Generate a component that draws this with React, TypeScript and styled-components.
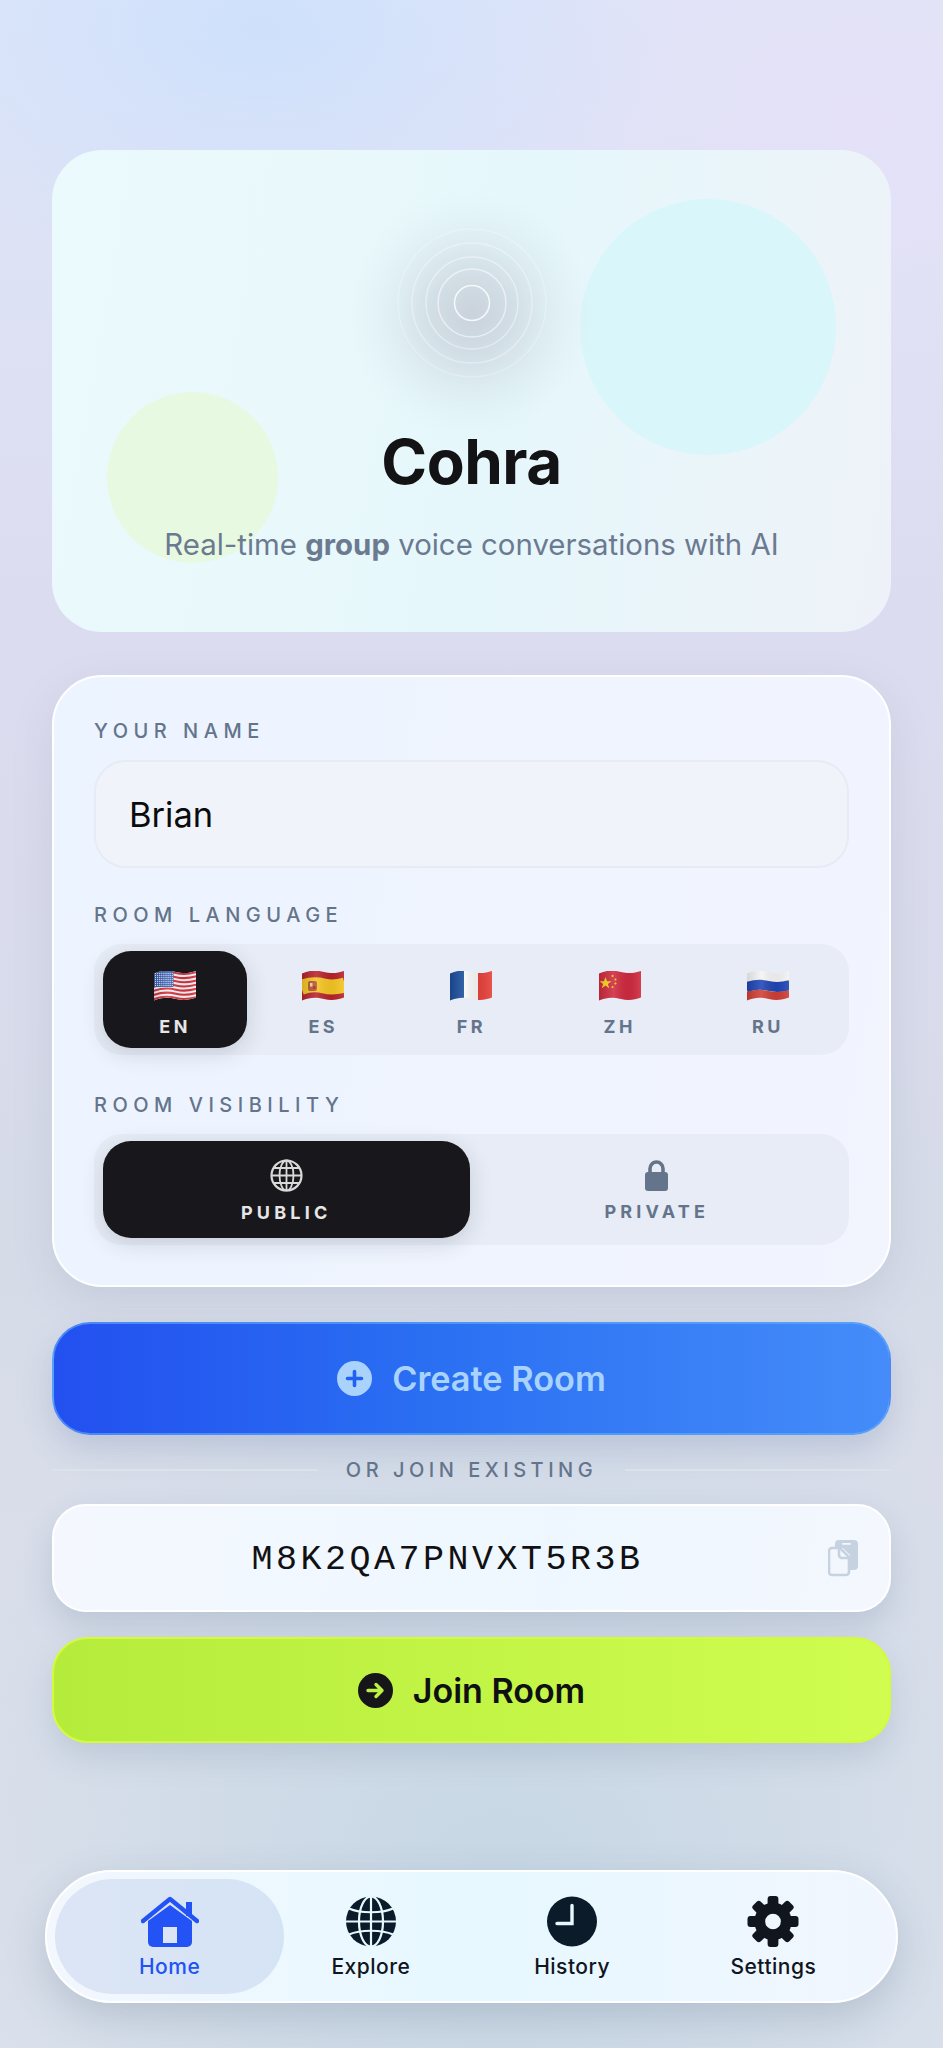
import React from "react";
import styled, { createGlobalStyle } from "styled-components";

const GlobalStyle = createGlobalStyle`
  html, body {
    margin: 0;
    padding: 0;
  }
  body {
    font-family: Inter, "Liberation Sans", sans-serif;
    background: #dfe3ee;
  }
  * {
    box-sizing: border-box;
  }
`;

const Page = styled.div`
  width: 943px;
  height: 2048px;
  padding: 150px 52px 45px;
  display: flex;
  flex-direction: column;
  overflow: hidden;
  background:
    radial-gradient(420px 260px at 260px 30px, rgba(205, 224, 252, 0.9), transparent),
    radial-gradient(520px 420px at 860px 120px, rgba(229, 225, 248, 0.9), transparent),
    radial-gradient(600px 600px at 500px 1900px, rgba(196, 214, 228, 0.9), transparent),
    linear-gradient(180deg, #dfe6f8 0%, #dcdcf0 30%, #d6dbe8 60%, #dde2ec 100%);
`;

const Hero = styled.section`
  position: relative;
  height: 482px;
  margin-bottom: 43px;
  padding-top: 73px;
  border-radius: 50px;
  overflow: hidden;
  display: flex;
  flex-direction: column;
  align-items: center;
  background: linear-gradient(100deg, #ebfafc 0%, #e6f7fb 55%, #eef2f8 100%);
`;

const Blob = styled.div<{ $size: number; $x: number; $y: number; $color: string }>`
  position: absolute;
  left: ${(p) => p.$x}px;
  top: ${(p) => p.$y}px;
  width: ${(p) => p.$size}px;
  height: ${(p) => p.$size}px;
  border-radius: 50%;
  background: ${(p) => p.$color};
`;

const LogoMark = styled.svg`
  position: relative;
  display: block;
  overflow: visible;
`;

const Title = styled.h1`
  position: relative;
  margin: 41px 0 0;
  font-size: 62px;
  line-height: 75px;
  font-weight: 700;
  letter-spacing: -0.5px;
  color: #131316;
`;

const Subtitle = styled.p`
  position: relative;
  margin: 28px 0 0;
  font-size: 29.4px;
  line-height: 36px;
  font-weight: 400;
  color: #6b7a90;
  strong {
    font-weight: 700;
  }
`;

const FormCard = styled.section`
  height: 612px;
  padding: 41px 40px 0;
  border: 2px solid #fff;
  border-radius: 50px;
  background: linear-gradient(100deg, #ecf4ff 0%, #f2f4fe 100%);
  box-shadow: 0 14px 40px rgba(110, 125, 155, 0.16);
  margin-bottom: 35px;
`;

const FieldLabel = styled.div<{ $gap?: number }>`
  height: 26px;
  margin-top: ${(p) => p.$gap ?? 0}px;
  margin-bottom: 16px;
  font-size: 20px;
  line-height: 26px;
  font-weight: 500;
  letter-spacing: 5.5px;
  color: #64748b;
`;

const NameInput = styled.input`
  display: block;
  width: 100%;
  height: 108px;
  padding: 0 33px;
  border: 2px solid #e6ebf4;
  border-radius: 32px;
  background: #f0f4fa;
  font-family: inherit;
  font-size: 34.5px;
  font-weight: 400;
  color: #0b0b0e;
  outline: none;
`;

const Segment = styled.div<{ $cols: number }>`
  display: grid;
  grid-template-columns: repeat(${(p) => p.$cols}, 1fr);
  gap: 4px;
  height: 111px;
  padding: 7px 9px;
  border-radius: 28px;
  background: #e7ecf6;
`;

const SegmentItem = styled.div<{ $active?: boolean; $top: number }>`
  display: flex;
  flex-direction: column;
  align-items: center;
  justify-content: flex-start;
  padding-top: ${(p) => p.$top}px;
  border-radius: 28px;
  color: ${(p) => (p.$active ? "#e6e6e6" : "#64748b")};
  background: ${(p) => (p.$active ? "#18181c" : "transparent")};
  box-shadow: ${(p) => (p.$active ? "0 6px 22px rgba(40, 50, 70, 0.16)" : "none")};
`;

const SegmentText = styled.span`
  margin-top: 15px;
  font-size: 18px;
  line-height: 22px;
  font-weight: 700;
  letter-spacing: 3.5px;
`;

const VisibilityText = styled(SegmentText)`
  margin-top: 10px;
  letter-spacing: 4.2px;
`;

const CreateButton = styled.button`
  display: flex;
  align-items: center;
  justify-content: center;
  gap: 20px;
  width: 100%;
  height: 113px;
  flex: none;
  border: 2px solid rgba(100, 175, 250, 0.6);
  border-radius: 38px;
  background: linear-gradient(90deg, #2350f0 0%, #2a6ff2 45%, #458cfa 100%);
  box-shadow: 0 14px 30px rgba(90, 115, 160, 0.22);
  color: #a9d3fd;
  font-family: inherit;
  font-size: 34.3px;
  font-weight: 600;
`;

const Divider = styled.div`
  display: flex;
  align-items: center;
  gap: 28px;
  height: 69px;
  flex: none;
  font-size: 20px;
  font-weight: 500;
  letter-spacing: 4.5px;
  color: #64748b;
  &::before,
  &::after {
    content: "";
    flex: 1;
    height: 2px;
    background: #dbe2ea;
  }
`;

const CodeBox = styled.div`
  display: flex;
  align-items: center;
  gap: 17px;
  height: 108px;
  flex: none;
  padding: 0 31px 0 30px;
  border: 2px solid #fff;
  border-radius: 34px;
  background: linear-gradient(100deg, #f4f8fe 0%, #eef7ff 60%, #f4f7fe 100%);
  box-shadow: 0 14px 30px rgba(90, 110, 140, 0.2);
  margin-bottom: 25px;
`;

const CodeInput = styled.input`
  flex: 1;
  min-width: 0;
  border: 0;
  padding: 4px 0 0;
  background: transparent;
  outline: none;
  text-align: center;
  font-family: "Liberation Mono", monospace;
  font-size: 35px;
  letter-spacing: 3.5px;
  color: #111114;
`;

const JoinButton = styled.button`
  display: flex;
  align-items: center;
  justify-content: center;
  gap: 20px;
  width: 100%;
  height: 106px;
  flex: none;
  border: 2px solid #d4fb3a;
  border-radius: 36px;
  background: linear-gradient(90deg, #b5ec3b 0%, #d0fd4f 100%);
  box-shadow: 0 14px 30px rgba(90, 110, 140, 0.18);
  color: #0f1013;
  font-family: inherit;
  font-size: 34px;
  font-weight: 600;
`;

const TabBar = styled.nav`
  display: flex;
  height: 133px;
  margin: auto -7px 0;
  flex: none;
  padding: 0 22px;
  border: 2px solid #fff;
  border-radius: 67px;
  background: linear-gradient(90deg, #f3f7fe 0%, #e7f8ff 50%, #f1f6fe 100%);
  box-shadow: 0 14px 40px rgba(90, 105, 130, 0.24);
`;

const TabItem = styled.div<{ $active?: boolean }>`
  position: relative;
  flex: 1;
  display: flex;
  flex-direction: column;
  align-items: center;
  padding-top: 24px;
  color: ${(p) => (p.$active ? "#2352f5" : "#10151e")};
  font-size: 21px;
  line-height: 26px;
  font-weight: 500;
  letter-spacing: 0.5px;
  &::before {
    content: "";
    display: ${(p) => (p.$active ? "block" : "none")};
    position: absolute;
    top: 7px;
    bottom: 7px;
    left: -14px;
    right: -14px;
    border-radius: 58px;
    background: linear-gradient(90deg, #dce5f5 0%, #d5e4f5 100%);
  }
`;

const TabGlyph = styled.svg`
  position: relative;
  display: block;
  margin-bottom: 7px;
`;

const TabLabel = styled.span`
  position: relative;
`;

const stripe = (y: number) => `M-1 ${y + 2.5} C8 ${y - 1} 14 ${y - 1} 22 ${y + 1} C30 ${y + 3} 36 ${y + 2} 43 ${y}`;

const FlagFrame = ({ id, children }: { id: string; children: React.ReactNode }) => (
  <svg width="42" height="30" viewBox="0 0 42 30">
    <defs>
      <clipPath id={id}>
        <path d="M0 2.5 C8 -1 14 -1 22 1 C30 3 36 2 42 0 L42 26.5 C36 28.5 30 30 22 28 C14 26 8 26 0 29.5 Z" />
      </clipPath>
      <linearGradient id={id + "-sh"} x1="0" x2="1" y1="0" y2="0">
        <stop offset="0" stopColor="#000" stopOpacity="0.12" />
        <stop offset="0.35" stopColor="#fff" stopOpacity="0.12" />
        <stop offset="0.7" stopColor="#000" stopOpacity="0.05" />
        <stop offset="1" stopColor="#fff" stopOpacity="0.1" />
      </linearGradient>
    </defs>
    <g clipPath={`url(#${id})`}>
      {children}
      <rect x="0" y="0" width="42" height="30" fill={`url(#${id}-sh)`} />
    </g>
  </svg>
);

const FlagUS = () => {
  const stripes = Array.from({ length: 13 }, (_, i) => i);
  const stars: [number, number][] = [];
  for (let r = 0; r < 7; r++) for (let c = 0; c < 9; c++) stars.push([1.5 + c * 2.1, 2.4 + r * 2]);
  return (
    <FlagFrame id="us">
      <rect width="42" height="30" fill="#f4f4f4" />
      {stripes.map((i) =>
        i % 2 === 0 ? <path key={i} d={stripe(i * 2.08 + 1)} stroke="#d5313f" strokeWidth="2.08" fill="none" /> : null
      )}
      <rect width="19.5" height="16" fill="#3a5fb0" />
      {stars.map(([x, y]) => (
        <circle key={`${x}-${y}`} cx={x} cy={y} r="0.55" fill="#e8eefb" />
      ))}
    </FlagFrame>
  );
};

const FlagES = () => (
  <FlagFrame id="es">
    <rect width="42" height="30" fill="#b7242c" />
    <path d={stripe(14)} stroke="#f4c524" strokeWidth="15" fill="none" />
    <rect x="6" y="10" width="9" height="10" rx="2" fill="#b8562e" />
    <rect x="8" y="12" width="2.5" height="3.5" fill="#e8d9a0" />
    <rect x="11" y="15" width="2.5" height="3" fill="#a52a2a" />
  </FlagFrame>
);

const FlagFR = () => (
  <FlagFrame id="fr">
    <rect width="14" height="30" fill="#1c4f9c" />
    <rect x="14" width="14" height="30" fill="#f7f7f7" />
    <rect x="28" width="14" height="30" fill="#e5433b" />
  </FlagFrame>
);

const FlagZH = () => (
  <FlagFrame id="zh">
    <rect width="42" height="30" fill="#cf2a3e" />
    <polygon
      points="6.5,6 8,10.2 12.5,10.2 8.9,12.9 10.2,17.2 6.5,14.6 2.8,17.2 4.1,12.9 0.5,10.2 5,10.2"
      fill="#f8d61c"
    />
    <circle cx="13.5" cy="5" r="1" fill="#f8d61c" />
    <circle cx="16.5" cy="8.5" r="1" fill="#f8d61c" />
    <circle cx="16.5" cy="12.5" r="1" fill="#f8d61c" />
    <circle cx="13.5" cy="16" r="1" fill="#f8d61c" />
  </FlagFrame>
);

const FlagRU = () => (
  <FlagFrame id="ru">
    <rect width="42" height="30" fill="#f4f4f4" />
    <path d={stripe(14)} stroke="#1f45b5" strokeWidth="10" fill="none" />
    <path d={stripe(24)} stroke="#cf3f36" strokeWidth="10" fill="none" />
  </FlagFrame>
);

const languages = [
  { code: "EN", flag: <FlagUS />, active: true },
  { code: "ES", flag: <FlagES /> },
  { code: "FR", flag: <FlagFR /> },
  { code: "ZH", flag: <FlagZH /> },
  { code: "RU", flag: <FlagRU /> },
];

const RingsLogo = () => (
  <LogoMark width="160" height="160" viewBox="-80 -80 160 160">
    <defs>
      <radialGradient id="glow" cx="0.5" cy="0.5" r="0.5">
        <stop offset="0" stopColor="#c8d0da" stopOpacity="0.95" />
        <stop offset="0.3" stopColor="#ccd6de" stopOpacity="0.8" />
        <stop offset="0.65" stopColor="#d2e2e8" stopOpacity="0.4" />
        <stop offset="1" stopColor="#dcecf2" stopOpacity="0" />
      </radialGradient>
    </defs>
    <circle cx="0" cy="12" r="125" fill="url(#glow)" />
    <g fill="none" stroke="#fff">
      <circle r="74" strokeOpacity="0.25" strokeWidth="1.5" />
      <circle r="60" strokeOpacity="0.35" strokeWidth="1.5" />
      <circle r="46" strokeOpacity="0.42" strokeWidth="1.5" />
      <circle r="34" strokeOpacity="0.55" strokeWidth="1.5" />
      <circle r="17.5" strokeOpacity="0.8" strokeWidth="1.6" />
    </g>
  </LogoMark>
);

const PublicGlobe = () => (
  <svg width="33" height="33" viewBox="0 0 33 33" fill="none" stroke="#d9d9d9" strokeWidth="1.8">
    <circle cx="16.5" cy="16.5" r="15" strokeWidth="2.2" />
    <ellipse cx="16.5" cy="16.5" rx="7" ry="15" />
    <path d="M16.5 1.5V31.5M1.5 16.5H31.5M4 9H29M4 24H29" />
  </svg>
);

const LockIcon = () => (
  <svg width="23" height="32" viewBox="0 0 23 32">
    <path d="M5 16V9.5a6.5 6.5 0 0 1 13 0V16" fill="none" stroke="#64748b" strokeWidth="3.6" />
    <rect x="0" y="13" width="23" height="19" rx="3" fill="#64748b" />
  </svg>
);

const PlusIcon = () => (
  <svg width="35" height="35" viewBox="0 0 35 35">
    <circle cx="17.5" cy="17.5" r="17.5" fill="#a9d3fd" />
    <path d="M17.5 10.5v14M10.5 17.5h14" stroke="#2160f0" strokeWidth="3.6" strokeLinecap="round" />
  </svg>
);

const ArrowIcon = () => (
  <svg width="35" height="35" viewBox="0 0 35 35">
    <circle cx="17.5" cy="17.5" r="17.5" fill="#16161a" />
    <path d="M10 17.5h14M18 11.5l6 6-6 6" fill="none" stroke="#bff045" strokeWidth="3.4" strokeLinecap="round" strokeLinejoin="round" />
  </svg>
);

const CopyIcon = () => (
  <svg width="30" height="37" viewBox="0 0 30 37" style={{ flex: "none" }}>
    <path d="M11 0H26a4 4 0 0 1 4 4V26a4 4 0 0 1-4 4H22V15L15 8H7V4a4 4 0 0 1 4-4Z" fill="#c6d2df" />
    <rect x="14" y="3" width="9" height="1.8" rx="0.9" fill="#f2f7fe" />
    <path d="M4 8H12L21 17V32a3 3 0 0 1-3 3H4a3 3 0 0 1-3-3V11a3 3 0 0 1 3-3Z" fill="#f2f7fe" stroke="#c6d2df" strokeWidth="2.6" />
    <path d="M11 8V15a3 3 0 0 0 3 3H21" fill="none" stroke="#c6d2df" strokeWidth="2.6" />
  </svg>
);

const HomeGlyph = () => (
  <TabGlyph width="58" height="51" viewBox="0 0 58 51">
    <rect x="45" y="6" width="6" height="14" fill="#2352f5" />
    <path d="M7 25 29 9 51 25V46a5 5 0 0 1-5 5H12a5 5 0 0 1-5-5Z" fill="#2352f5" />
    <path d="M2 25 29 3 56 25" fill="none" stroke="#2352f5" strokeWidth="4.4" strokeLinecap="round" strokeLinejoin="round" />
    <rect x="22" y="31" width="14" height="16" fill="#dce5f5" />
  </TabGlyph>
);

const ExploreGlyph = () => (
  <TabGlyph width="50" height="51" viewBox="0 0 50 50">
    <circle cx="25" cy="25" r="25" fill="#0c1b2a" />
    <g fill="none" stroke="#e8f8ff" strokeWidth="2.2">
      <ellipse cx="25" cy="25" rx="12" ry="25" />
      <path d="M25 0V50M0 25H50" />
      <path d="M3 12C14 17 36 17 47 12M3 38C14 33 36 33 47 38" />
    </g>
  </TabGlyph>
);

const HistoryGlyph = () => (
  <TabGlyph width="50" height="51" viewBox="0 0 50 50">
    <circle cx="25" cy="25" r="25" fill="#0c1b2a" />
    <path d="M25 9V27H10" fill="none" stroke="#e8f8ff" strokeWidth="3.4" strokeLinecap="round" />
  </TabGlyph>
);

const SettingsGlyph = () => (
  <TabGlyph width="52" height="51" viewBox="0 0 52 52">
    <g fill="#10151e">
      {[0, 45, 90, 135, 180, 225, 270, 315].map((a) => (
        <rect key={a} x="20.5" y="0" width="11" height="14" rx="3" transform={`rotate(${a} 26 26)`} />
      ))}
    </g>
    <circle cx="26" cy="26" r="13.5" fill="none" stroke="#10151e" strokeWidth="11" />
  </TabGlyph>
);

export default function App() {
  return (
    <Page>
      <GlobalStyle />
      <Hero>
        <Blob $size={256} $x={528} $y={49} $color="#d9f6fa" />
        <Blob $size={171} $x={55} $y={242} $color="#e8f9e2" />
        <RingsLogo />
        <Title>Cohra</Title>
        <Subtitle>
          Real-time <strong>group</strong> voice conversations with AI
        </Subtitle>
      </Hero>

      <FormCard>
        <FieldLabel>YOUR NAME</FieldLabel>
        <NameInput defaultValue="Brian" readOnly />
        <FieldLabel $gap={34}>ROOM LANGUAGE</FieldLabel>
        <Segment $cols={5}>
          {languages.map((l) => (
            <SegmentItem key={l.code} $active={l.active} $top={20}>
              {l.flag}
              <SegmentText>{l.code}</SegmentText>
            </SegmentItem>
          ))}
        </Segment>
        <FieldLabel $gap={37}>ROOM VISIBILITY</FieldLabel>
        <Segment $cols={2}>
          <SegmentItem $active $top={18}>
            <PublicGlobe />
            <VisibilityText>PUBLIC</VisibilityText>
          </SegmentItem>
          <SegmentItem $top={18}>
            <LockIcon />
            <VisibilityText>PRIVATE</VisibilityText>
          </SegmentItem>
        </Segment>
      </FormCard>

      <CreateButton>
        <PlusIcon />
        Create Room
      </CreateButton>
      <Divider>OR JOIN EXISTING</Divider>
      <CodeBox>
        <CodeInput defaultValue="M8K2QA7PNVXT5R3B" readOnly />
        <CopyIcon />
      </CodeBox>
      <JoinButton>
        <ArrowIcon />
        Join Room
      </JoinButton>

      <TabBar>
        <TabItem $active>
          <HomeGlyph />
          <TabLabel>Home</TabLabel>
        </TabItem>
        <TabItem>
          <ExploreGlyph />
          <TabLabel>Explore</TabLabel>
        </TabItem>
        <TabItem>
          <HistoryGlyph />
          <TabLabel>History</TabLabel>
        </TabItem>
        <TabItem>
          <SettingsGlyph />
          <TabLabel>Settings</TabLabel>
        </TabItem>
      </TabBar>
    </Page>
  );
}
